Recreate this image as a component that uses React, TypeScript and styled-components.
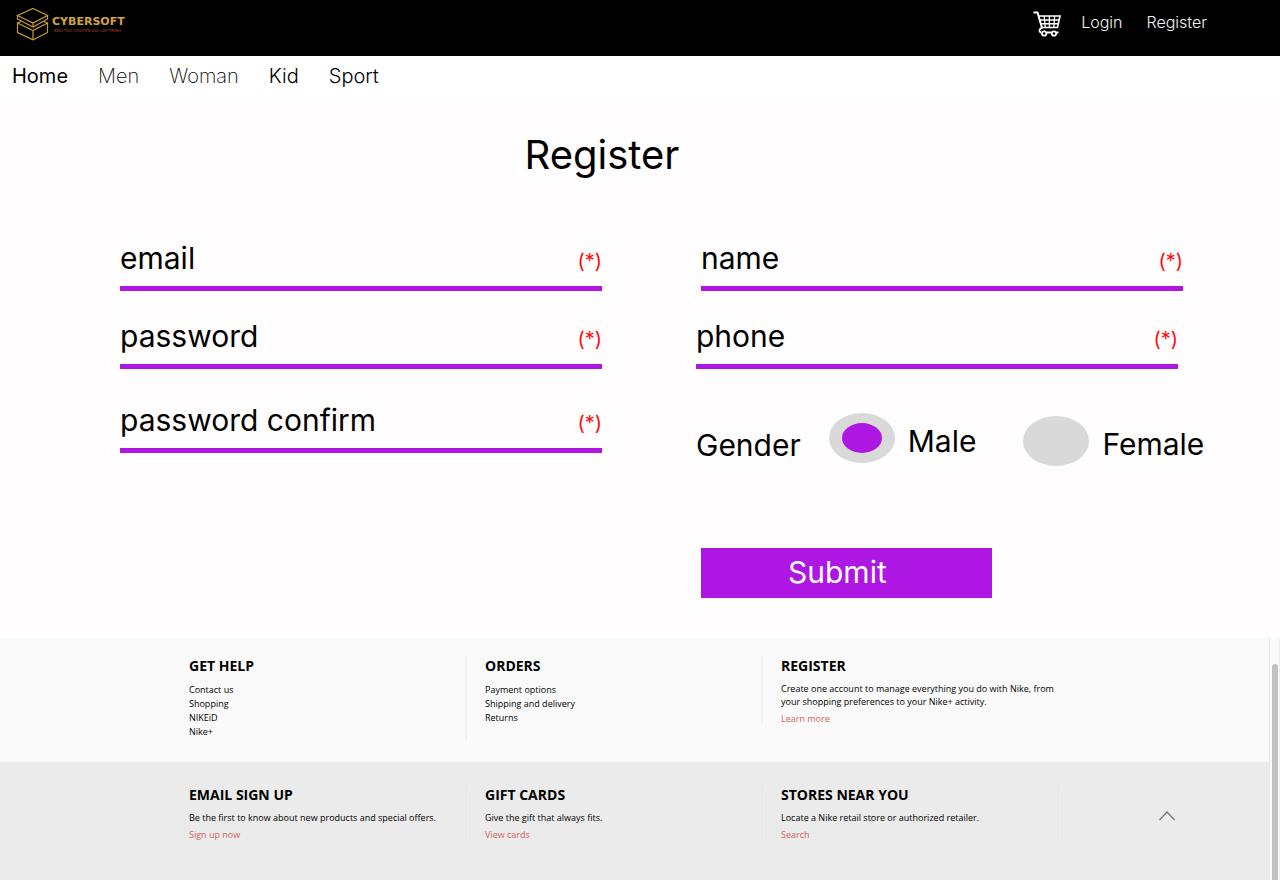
import React, { useState } from "react";
import styled, { createGlobalStyle } from "styled-components";

const violet = "#ae16e4";
const grey = "#d9d9d9";

const GlobalStyle = createGlobalStyle`
  *, *::before, *::after { box-sizing: border-box; }
  body { margin: 0; font-family: Inter, sans-serif; color: #000; background: #fffdfe; }
  h1, h2, p, ul { margin: 0; padding: 0; }
  ul { list-style: none; }
  a { color: inherit; text-decoration: none; }
`;

const Page = styled.div`
  display: flex;
  flex-direction: column;
  min-height: 100vh;
`;

const TopBar = styled.header`
  display: flex;
  justify-content: space-between;
  align-items: flex-start;
  height: 56px;
  padding: 7px 73px 0 16px;
  background: #000;
`;

const Logo = styled.a`
  display: flex;
  gap: 3px;
`;

const LogoText = styled.span`
  display: flex;
  flex-direction: column;
  padding-top: 9px;
  white-space: nowrap;
`;

const LogoName = styled.span`
  font: 700 11px/11px "DejaVu Sans", sans-serif;
  color: #d0a538;
`;

const LogoTagline = styled.span`
  padding-left: 2px;
  font: 400 4px/7px "DejaVu Sans", sans-serif;
  color: #a8472f;
`;

const Account = styled.nav`
  display: flex;
  align-items: center;
  gap: 24px;
  height: 30px;
  color: #f0f0f0;
  font-size: 16px;
  font-weight: 300;
  line-height: 20px;
`;

const CartLink = styled.a`
  display: flex;
  padding-top: 3px;
  margin-right: -4px;
`;

const MainNav = styled.nav`
  display: flex;
  gap: 30px;
  height: 43px;
  padding: 8px 12px 0;
  background: #fff;
  font-size: 20px;
  line-height: 24px;
`;

const NavLink = styled.a<{ $weight: number }>`
  font-weight: ${(p) => p.$weight};
`;

const Main = styled.main`
  flex: 1;
  padding: 32px 0 40px 120px;
`;

const Title = styled.h1`
  padding-right: 196px;
  font-size: 40px;
  font-weight: 400;
  line-height: 48px;
  text-align: center;
`;

const Form = styled.form`
  display: flex;
  flex-direction: column;
  padding-top: 61px;
`;

const Row = styled.div<{ $gutter: number; $top?: number }>`
  display: grid;
  grid-template-columns: minmax(0, 1fr) minmax(0, 1fr);
  column-gap: ${(p) => p.$gutter}px;
  margin-right: ${(p) => 196 - p.$gutter}px;
  padding-top: ${(p) => p.$top ?? 0}px;
`;

const FieldBox = styled.div`
  display: flex;
  height: 51px;
  border-bottom: 5px solid ${violet};
  font-size: 30px;
  line-height: 36px;
`;

const FieldInput = styled.input`
  flex: 1;
  min-width: 0;
  height: 36px;
  padding: 0 12px;
  border: 0;
  outline: 0;
  background: transparent;
  font: inherit;
`;

const Required = styled.span`
  padding-top: 3px;
  color: #ff0d0d;
  font-size: 20px;
`;

const GenderGroup = styled.div`
  display: flex;
  align-items: flex-end;
  height: 53px;
  margin-top: 11px;
  font-size: 30px;
  line-height: 42px;
  white-space: nowrap;
`;

const GenderOption = styled.label<{ $raised?: boolean }>`
  display: flex;
  align-items: flex-end;
  align-self: ${(p) => (p.$raised ? "flex-start" : "flex-end")};
  gap: 13px;
  height: 50px;
  margin-left: ${(p) => (p.$raised ? 28 : 47)}px;
  line-height: 44px;
`;

const Radio = styled.input`
  appearance: none;
  display: grid;
  place-items: center;
  flex: none;
  width: 66px;
  height: 50px;
  margin: 0;
  border-radius: 50%;
  background: ${grey};

  &:checked::before {
    content: "";
    width: 40px;
    height: 30px;
    border-radius: 50%;
    background: ${violet};
  }
`;

const Submit = styled.button`
  grid-column: 2;
  width: 291px;
  height: 50px;
  padding: 0 87px 2px;
  border: 0;
  background: ${violet};
  color: #fff;
  font: 400 30px/36px Inter, sans-serif;
  text-align: left;
`;

const Footer = styled.footer`
  display: flex;
  font-family: "Open Sans", sans-serif;
  font-size: 9px;
  line-height: 13px;
`;

const FooterBody = styled.div`
  flex: 1;
`;

const Band = styled.section<{ $lower?: boolean }>`
  display: grid;
  grid-template-columns: 1fr 1fr 1fr 210px;
  align-items: start;
  min-height: ${(p) => (p.$lower ? 118 : 124)}px;
  padding: ${(p) => (p.$lower ? 23 : 18)}px 0 0 171px;
  background: ${(p) => (p.$lower ? "#ebebeb" : "#fafafa")};
`;

const FooterColumn = styled.div<{ $divider?: string }>`
  padding-left: 18px;
  border-right: 2px solid ${(p) => p.$divider ?? "transparent"};
`;

const FooterHeading = styled.h2`
  margin-bottom: 6px;
  font-size: 14px;
  font-weight: 700;
  line-height: 20px;
`;

const FooterList = styled.ul`
  && { padding-top: 1px; }
`;

const FooterItem = styled.li`
  line-height: 14px;
`;

const FooterAction = styled.a`
  display: block;
  width: max-content;
  margin-top: 4px;
  color: #d6605e;
  line-height: 14px;
`;

const BackToTop = styled.button`
  justify-self: center;
  display: flex;
  padding: 24px 0 8px 6px;
  border: 0;
  background: none;
`;

const ScrollTrack = styled.div`
  width: 11px;
  padding: 26px 2px 0;
  border-left: 1px solid #e8e8e8;
  border-right: 1px solid #ededed;
  background: #fafafa;
`;

const ScrollThumb = styled.div`
  width: 6px;
  height: 100%;
  border-radius: 3px 3px 0 0;
  background: #c1c1c1;
`;

const LogoMark = () => (
  <svg width="33" height="34" viewBox="0 0 33 34" fill="none" stroke="#c89b2c" strokeWidth="1.2" aria-hidden="true">
    <path d="M17 1.5 31.5 8.5 17 16 1.5 8.5Z" />
    <path d="M1.5 8.5V12L17 20 31.5 12V8.5" />
    <path d="M5 14.5 1.5 16V25.5L17 32.8 31.5 25.5V16L28 14.5" />
    <path d="M1.5 16 17 23.5 31.5 16M17 16V20M17 23.5V32.8" />
  </svg>
);

const CartIcon = () => (
  <svg width="28" height="26" viewBox="0 0 28 26" fill="none" stroke="#fff" strokeWidth="1.6" aria-hidden="true">
    <path d="M.5 1.5H4.5L9.2 17.5" strokeWidth="2" />
    <path d="M5.5 5H27L24.5 16.5H9" />
    <path d="M6.8 9H26M8 12.8H25" strokeWidth="1.5" />
    <path d="M11.2 5 12.2 16.5M16.4 5V16.5M21.6 5 20.8 16.5" strokeWidth="1.3" />
    <path d="M9.2 16.5C5.5 18 5.8 21.5 8.5 21.5M14 21.5H18.5M23.5 21.5H25.5" strokeWidth="1.8" />
    <circle cx="11.2" cy="22.5" r="2.2" strokeWidth="1.8" />
    <circle cx="21" cy="22.5" r="2.2" strokeWidth="1.8" />
  </svg>
);

interface FieldProps {
  id: string;
  label: string;
  type?: string;
}

const Field = ({ id, label, type = "text" }: FieldProps) => (
  <FieldBox>
    <label htmlFor={id}>{label}</label>
    <FieldInput id={id} name={id} type={type} required />
    <Required>(*)</Required>
  </FieldBox>
);

const navItems = [
  { label: "Home", weight: 400 },
  { label: "Men", weight: 200 },
  { label: "Woman", weight: 200 },
  { label: "Kid", weight: 300 },
  { label: "Sport", weight: 300 },
];

export default function App() {
  const [gender, setGender] = useState("male");

  return (
    <Page>
      <GlobalStyle />
      <TopBar>
        <Logo href="#">
          <LogoMark />
          <LogoText>
            <LogoName>CYBERSOFT</LogoName>
            <LogoTagline>ĐÀO TẠO CHUYÊN GIA LẬP TRÌNH</LogoTagline>
          </LogoText>
        </Logo>
        <Account>
          <CartLink href="#cart" aria-label="Cart">
            <CartIcon />
          </CartLink>
          <a href="#login">Login</a>
          <a href="#register">Register</a>
        </Account>
      </TopBar>

      <MainNav>
        {navItems.map((item) => (
          <NavLink key={item.label} href="#" $weight={item.weight}>
            {item.label}
          </NavLink>
        ))}
      </MainNav>

      <Main>
        <Title>Register</Title>
        <Form onSubmit={(e) => e.preventDefault()}>
          <Row $gutter={99}>
            <Field id="email" label="email" type="email" />
            <Field id="name" label="name" />
          </Row>
          <Row $gutter={94} $top={27}>
            <Field id="password" label="password" type="password" />
            <Field id="phone" label="phone" type="tel" />
          </Row>
          <Row $gutter={94} $top={33}>
            <Field id="confirm" label="password confirm" type="password" />
            <GenderGroup role="radiogroup" aria-labelledby="gender-label">
              <span id="gender-label">Gender</span>
              <GenderOption $raised>
                <Radio type="radio" name="gender" checked={gender === "male"} onChange={() => setGender("male")} />
                Male
              </GenderOption>
              <GenderOption>
                <Radio type="radio" name="gender" checked={gender === "female"} onChange={() => setGender("female")} />
                Female
              </GenderOption>
            </GenderGroup>
          </Row>
          <Row $gutter={99} $top={82}>
            <Submit type="submit">Submit</Submit>
          </Row>
        </Form>
      </Main>

      <Footer>
        <FooterBody>
          <Band>
            <FooterColumn $divider="#f2f2f2">
              <FooterHeading>GET HELP</FooterHeading>
              <FooterList>
                <FooterItem><a href="#">Contact us</a></FooterItem>
                <FooterItem><a href="#">Shopping</a></FooterItem>
                <FooterItem><a href="#">NIKEiD</a></FooterItem>
                <FooterItem><a href="#">Nike+</a></FooterItem>
              </FooterList>
            </FooterColumn>
            <FooterColumn $divider="#f2f2f2">
              <FooterHeading>ORDERS</FooterHeading>
              <FooterList>
                <FooterItem><a href="#">Payment options</a></FooterItem>
                <FooterItem><a href="#">Shipping and delivery</a></FooterItem>
                <FooterItem><a href="#">Returns</a></FooterItem>
              </FooterList>
            </FooterColumn>
            <FooterColumn>
              <FooterHeading>REGISTER</FooterHeading>
              <p>
                Create one account to manage everything you do with Nike, from
                <br />
                your shopping preferences to your Nike+ activity.
              </p>
              <FooterAction href="#">Learn more</FooterAction>
            </FooterColumn>
          </Band>
          <Band $lower>
            <FooterColumn $divider="#e8e8e8">
              <FooterHeading>EMAIL SIGN UP</FooterHeading>
              <p>Be the first to know about new products and special offers.</p>
              <FooterAction href="#">Sign up now</FooterAction>
            </FooterColumn>
            <FooterColumn $divider="#e8e8e8">
              <FooterHeading>GIFT CARDS</FooterHeading>
              <p>Give the gift that always fits.</p>
              <FooterAction href="#">View cards</FooterAction>
            </FooterColumn>
            <FooterColumn $divider="#e8e8e8">
              <FooterHeading>STORES NEAR YOU</FooterHeading>
              <p>Locate a Nike retail store or authorized retailer.</p>
              <FooterAction href="#">Search</FooterAction>
            </FooterColumn>
            <BackToTop type="button" aria-label="Back to top">
              <svg width="18" height="12" viewBox="0 0 18 12" fill="none" stroke="#777" strokeWidth="1.2" aria-hidden="true">
                <path d="M1.5 11 9 3 16.5 11" />
              </svg>
            </BackToTop>
          </Band>
        </FooterBody>
        <ScrollTrack aria-hidden="true">
          <ScrollThumb />
        </ScrollTrack>
      </Footer>
    </Page>
  );
}
